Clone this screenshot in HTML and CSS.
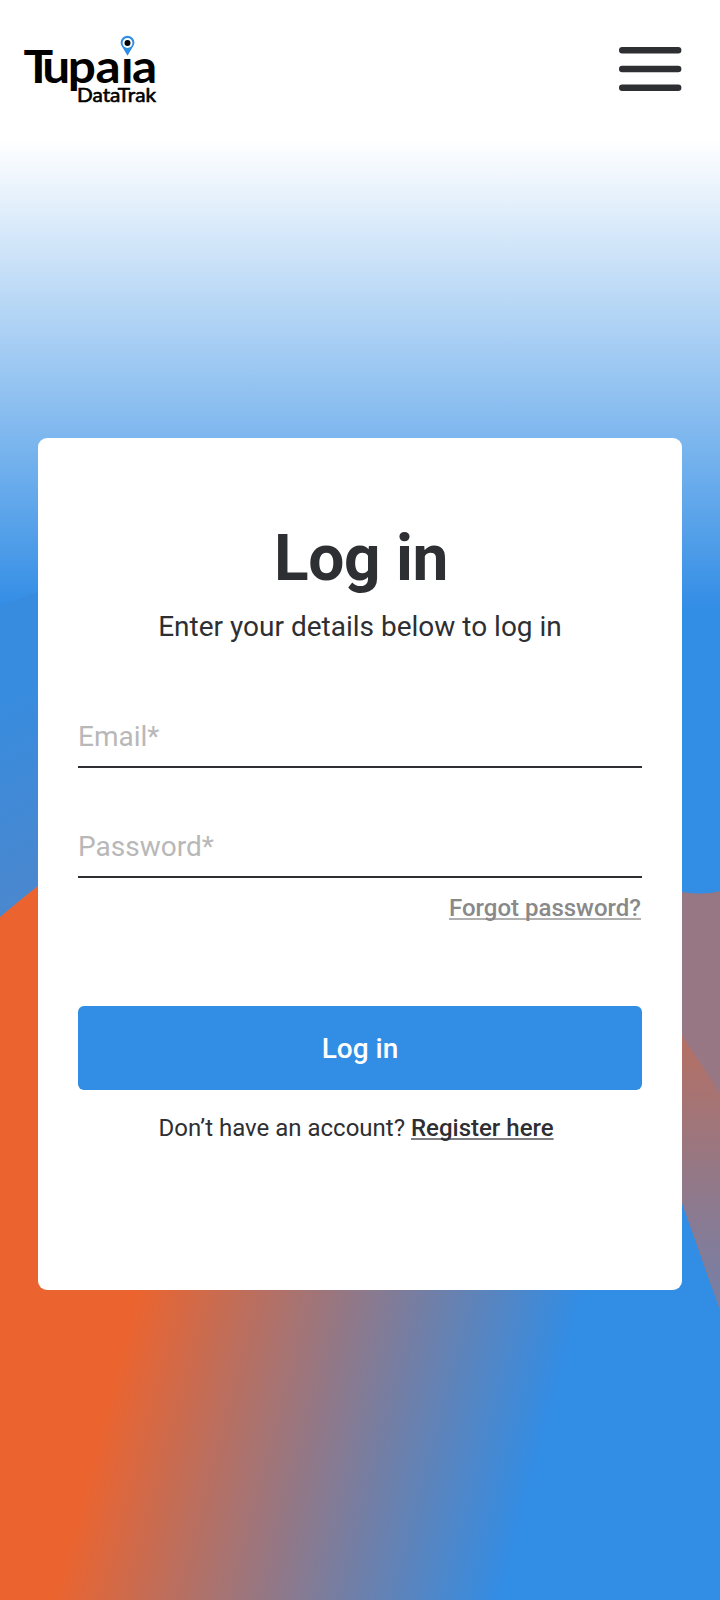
FILE: index.html
```html
<!DOCTYPE html>
<html lang="en">
<head>
<meta charset="utf-8">
<title>Tupaia DataTrak</title>
<link rel="stylesheet" href="styles.css">
</head>
<body>
<div class="page">
  <svg class="backdrop" viewBox="0 0 720 1600" aria-hidden="true">
    <defs>
      <linearGradient id="sky" gradientUnits="userSpaceOnUse" x1="0" y1="140" x2="0" y2="610">
        <stop offset="0" stop-color="#fff"/><stop offset="1" stop-color="#328de5"/>
      </linearGradient>
      <linearGradient id="ground" gradientUnits="userSpaceOnUse" x1="138" y1="1290" x2="554" y2="1403">
        <stop offset="0" stop-color="#eb642f"/><stop offset="1" stop-color="#328de5"/>
      </linearGradient>
      <linearGradient id="shade" gradientUnits="userSpaceOnUse" x1="0" y1="700" x2="90" y2="880">
        <stop offset="0" stop-color="#388cdf"/><stop offset="1" stop-color="#4b87cd"/>
      </linearGradient>
      <linearGradient id="ember" gradientUnits="userSpaceOnUse" x1="0" y1="1040" x2="0" y2="1310">
        <stop offset="0" stop-color="#b47064"/><stop offset="1" stop-color="#7480a9"/>
      </linearGradient>
    </defs>
    <rect width="720" height="1600" fill="url(#sky)"/>
    <path d="M0 605 38 592 360 500V1000H0Z" fill="url(#shade)"/>
    <path d="M0 917Q20 900 38 886L360 800 600 1000 682 1203 720 1310V1600H0Z" fill="url(#ground)"/>
    <path d="M640 884 682 892Q704 895.5 720 891V1310L682 1203 640 1100Z" fill="#967783"/>
    <path d="M640 980 682 1036Q705 1069 720 1095V1310Q701 1250 682 1203L640 1100Z" fill="url(#ember)"/>
  </svg>

  <header class="header">
    <svg class="logo" viewBox="0 0 140 76" role="img" aria-label="Tupaia DataTrak">
      <text class="logo-name" transform="scale(1.09 1)" x="-0.5 16.8 40.1 65.6 89.1 99.2" y="48.8">Tupaia</text>
      <rect x="96" y="0" width="15" height="23" fill="#fff"/>
      <path d="M103.5 21.7 98.6 13.4A6.9 6.9 0 1 1 108.4 13.4Z" fill="#328de5"/>
      <circle cx="103.5" cy="9" r="4.9" fill="#fff"/>
      <circle cx="103.5" cy="9" r="3" fill="#000"/>
      <text class="logo-product" x="53" y="67.5" textLength="79" lengthAdjust="spacingAndGlyphs">DataTrak</text>
    </svg>
    <button class="menu" aria-label="Menu">
      <svg class="menu-icon" viewBox="0 0 63 45">
        <path d="M3.2 3.3H59.2M3.2 22H59.2M3.2 40.7H59.2" stroke="#2e2f33" stroke-width="6.4" stroke-linecap="round"/>
      </svg>
    </button>
  </header>

  <main class="card">
    <h1 class="title">Log in</h1>
    <p class="subtitle">Enter your details below to log in</p>
    <form class="form">
      <input class="field" type="email" placeholder="Email*">
      <input class="field" type="password" placeholder="Password*">
      <a class="forgot">Forgot password?</a>
      <button class="submit" type="button">Log in</button>
    </form>
    <p class="register">Don’t have an account? <a class="register-link">Register here</a></p>
  </main>
</div>
</body>
</html>
```
FILE: styles.css
```css
* { box-sizing: border-box; }
body { margin: 0; font-family: Roboto, sans-serif; color: #2e2f33; }
.page { position: relative; width: 720px; height: 1600px; overflow: hidden; }
.backdrop { position: absolute; inset: 0; width: 720px; height: 1600px; }

.header {
  position: relative;
  display: flex;
  justify-content: space-between;
  align-items: flex-start;
  height: 438px;
  padding: 34px 38px 0 24px;
}
.logo { width: 140px; height: 76px; overflow: visible; }
.logo-name { font: 700 45.5px Lato, sans-serif; }
.logo-product { font: 400 19px Lato, sans-serif; stroke: #000; stroke-width: 0.6px; }
.menu { margin-top: 13px; padding: 0; border: 0; background: none; }
.menu-icon { display: block; width: 63px; height: 45px; }

.card {
  position: relative;
  width: 644px;
  height: 852px;
  margin: 0 auto;
  padding: 85px 40px 0;
  border-radius: 9px;
  background: #fff;
}
.title {
  margin: 0;
  padding-left: 2px;
  font-size: 64px;
  line-height: 72px;
  font-weight: 700;
  letter-spacing: -0.3px;
  text-align: center;
}
.subtitle { margin: 16px 0 0; font-size: 28px; line-height: 32px; text-align: center; }
.form { display: flex; flex-direction: column; padding-top: 63px; }
.field {
  height: 62px;
  padding: 0;
  border: 0;
  border-bottom: 2px solid #2e2f33;
  border-radius: 0;
  background: none;
  font: 400 28px Roboto, sans-serif;
}
.field + .field { margin-top: 48px; }
.field::placeholder { color: #b8b8b8; opacity: 1; }
.forgot {
  align-self: flex-end;
  margin: 16px 1px 0 0;
  color: #898989;
  font-size: 24px;
  line-height: 28px;
  font-weight: 500;
  text-decoration: underline #b0b0b0 2px;
  text-decoration-skip-ink: none;
  text-underline-offset: 2px;
}
.submit {
  height: 84px;
  margin-top: 84px;
  padding: 0;
  border: 0;
  border-radius: 6px;
  background: #328de5;
  color: #fff;
  font: 500 28px Roboto, sans-serif;
}
.register { margin: 24px 0 0; padding-left: 80.6px; font-size: 24px; line-height: 28px; white-space: nowrap; }
.register-link {
  font-weight: 500;
  text-decoration: underline #808084 2px;
  text-decoration-skip-ink: none;
  text-underline-offset: 2px;
}
```
